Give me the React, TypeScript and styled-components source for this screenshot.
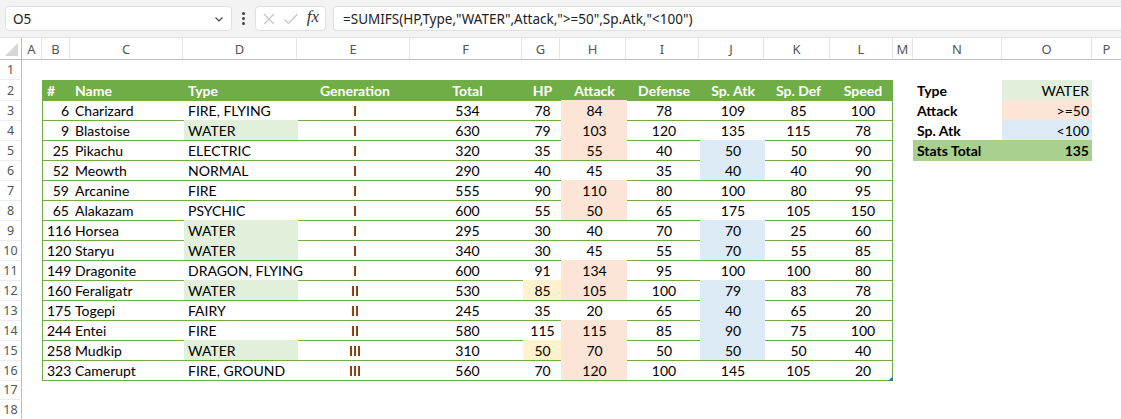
import styled, { createGlobalStyle } from 'styled-components';

const GlobalStyle = createGlobalStyle`
  html, body { margin: 0; padding: 0; background: #fff; }
  body { width: 1121px; height: 419px; overflow: hidden; }
  * { box-sizing: border-box; }
`;

const UI_FONT = `'Noto Sans', 'Open Sans', sans-serif`;
const CELL_FONT = `Lato, 'Noto Sans', sans-serif`;

const COLS = `22px 20px 28px 113px 114px 113px 112px 38px 66px 73px 65px 66px 63px 20px 89px 90px 1fr`;
const TABLE_COLS = `28px 113px 114px 113px 112px 38px 66px 73px 65px 66px 63px`;

const GREEN = '#70ad47';
const FILLS = {
  water: '#e2efda',
  attack: '#fce4d6',
  spatk: '#ddebf7',
  hp: '#fff2cc',
  total: '#a9d08e',
};

const Page = styled.div`
  width: 1121px;
  height: 419px;
  overflow: hidden;
  background: #fff;
`;

/* ---------- formula bar ---------- */

const Toolbar = styled.div`
  height: 38px;
  background: #f3f3f3;
  display: flex;
  align-items: center;
  padding: 0 0 0 5px;
  border-bottom: 1px solid #e2e2e2;
`;

const Box = styled.div`
  height: 25px;
  background: #fff;
  border: 1px solid #e0e0e0;
  border-radius: 4px;
  display: flex;
  align-items: center;
  font-family: ${UI_FONT};
  font-size: 13.5px;
  color: #222;
`;

const NameBox = styled(Box)`
  width: 227px;
  padding: 0 6px 0 7px;
  justify-content: space-between;
`;

const Dots = styled.div`
  width: 23px;
  display: flex;
  flex-direction: column;
  align-items: center;
  gap: 2px;
  span {
    width: 3px;
    height: 3px;
    border-radius: 50%;
    background: #444;
  }
`;

const FxBox = styled(Box)`
  width: 71px;
  padding: 0 6px 0 6px;
  justify-content: space-between;
`;

const Fx = styled.span`
  font-family: 'Liberation Serif', serif;
  font-style: italic;
  font-size: 17px;
  color: #333;
  margin-top: -3px;
`;

const FormulaBox = styled(Box)`
  flex: 1;
  margin-left: 7px;
  padding-left: 9px;
  border-right: none;
  border-radius: 4px 0 0 4px;
  white-space: pre;
`;

/* ---------- sheet ---------- */

const SheetRow = styled.div<{ $h?: number }>`
  display: grid;
  grid-template-columns: ${COLS};
  height: ${({ $h }) => $h ?? 20}px;
`;

const ColHead = styled.div`
  border-right: 1px solid #e4e4e4;
  border-bottom: 1px solid #bdbdbd;
  display: flex;
  align-items: center;
  justify-content: center;
  font-family: ${UI_FONT};
  font-size: 13px;
  color: #555;
  &:last-child { border-right: none; }
`;

const Corner = styled(ColHead)`
  position: relative;
  border-right: 1px solid #bdbdbd;
  &::after {
    content: '';
    position: absolute;
    right: 3px;
    bottom: 3px;
    border-style: solid;
    border-width: 0 0 13px 13px;
    border-color: transparent transparent #d6d6d6 transparent;
  }
`;

const RowNum = styled.div`
  border-right: 1px solid #bdbdbd;
  border-bottom: 1px solid #ececec;
  display: flex;
  align-items: center;
  justify-content: center;
  font-family: ${UI_FONT};
  font-size: 12.5px;
  color: #555;
`;

const Span = styled.div<{ $n: number }>`
  grid-column: span ${({ $n }) => $n};
`;

const TableRow = styled.div<{ $head?: boolean }>`
  grid-column: span 11;
  position: relative;
  display: grid;
  grid-template-columns: ${TABLE_COLS};
  border-left: 1px solid ${GREEN};
  border-right: 1px solid ${GREEN};
  border-bottom: 1px solid ${GREEN};
  background: ${({ $head }) => ($head ? GREEN : 'transparent')};
  color: ${({ $head }) => ($head ? '#fff' : '#000')};
  font-weight: ${({ $head }) => ($head ? 700 : 400)};
`;

const Handle = styled.div`
  position: absolute;
  right: -1px;
  bottom: -1px;
  border-style: solid;
  border-width: 0 0 5px 5px;
  border-color: transparent transparent #4a6fa0 transparent;
`;

const Cell = styled.div<{
  $align?: 'left' | 'center' | 'right';
  $fill?: string;
  $bold?: boolean;
  $rule?: boolean;
  $tight?: boolean;
}>`
  font-family: ${CELL_FONT};
  font-size: 14px;
  line-height: 19px;
  padding: 1px ${({ $tight }) => ($tight ? 2 : 3)}px 0 4px;
  white-space: nowrap;
  overflow: visible;
  text-align: ${({ $align }) => $align ?? 'left'};
  background: ${({ $fill }) => $fill ?? 'transparent'};
  font-weight: ${({ $bold }) => ($bold ? 700 : 'inherit')};
  ${({ $rule }) => $rule && 'border-bottom: 1px solid #000;'}
`;

type Mon = [number, string, string, string, number, number, number, number, number, number, number];

const mons: Mon[] = [
  [6, 'Charizard', 'FIRE, FLYING', 'I', 534, 78, 84, 78, 109, 85, 100],
  [9, 'Blastoise', 'WATER', 'I', 630, 79, 103, 120, 135, 115, 78],
  [25, 'Pikachu', 'ELECTRIC', 'I', 320, 35, 55, 40, 50, 50, 90],
  [52, 'Meowth', 'NORMAL', 'I', 290, 40, 45, 35, 40, 40, 90],
  [59, 'Arcanine', 'FIRE', 'I', 555, 90, 110, 80, 100, 80, 95],
  [65, 'Alakazam', 'PSYCHIC', 'I', 600, 55, 50, 65, 175, 105, 150],
  [116, 'Horsea', 'WATER', 'I', 295, 30, 40, 70, 70, 25, 60],
  [120, 'Staryu', 'WATER', 'I', 340, 30, 45, 55, 70, 55, 85],
  [149, 'Dragonite', 'DRAGON, FLYING', 'I', 600, 91, 134, 95, 100, 100, 80],
  [160, 'Feraligatr', 'WATER', 'II', 530, 85, 105, 100, 79, 83, 78],
  [175, 'Togepi', 'FAIRY', 'II', 245, 35, 20, 65, 40, 65, 20],
  [244, 'Entei', 'FIRE', 'II', 580, 115, 115, 85, 90, 75, 100],
  [258, 'Mudkip', 'WATER', 'III', 310, 50, 70, 50, 50, 50, 40],
  [323, 'Camerupt', 'FIRE, GROUND', 'III', 560, 70, 120, 100, 145, 105, 20],
];

const headers = ['#', 'Name', 'Type', 'Generation', 'Total', 'HP', 'Attack', 'Defense', 'Sp. Atk', 'Sp. Def', 'Speed'];
const letters = ['A', 'B', 'C', 'D', 'E', 'F', 'G', 'H', 'I', 'J', 'K', 'L', 'M', 'N', 'O', 'P'];

const criteria: [string, string, string][] = [
  ['Type', 'WATER', FILLS.water],
  ['Attack', '>=50', FILLS.attack],
  ['Sp. Atk', '<100', FILLS.spatk],
];

const total = mons
  .filter((m) => m[2] === 'WATER' && m[6] >= 50 && m[8] < 100)
  .reduce((s, m) => s + m[5], 0);

const Chevron = () => (
  <svg width="12" height="12" viewBox="0 0 12 12">
    <path d="M2.5 4.5 L6 8 L9.5 4.5" fill="none" stroke="#444" strokeWidth="1.2" />
  </svg>
);

const Cross = () => (
  <svg width="14" height="14" viewBox="0 0 14 14">
    <path d="M2 2 L12 12 M12 2 L2 12" stroke="#c4c4c4" strokeWidth="1.1" />
  </svg>
);

const Tick = () => (
  <svg width="16" height="14" viewBox="0 0 16 14">
    <path d="M1.5 7.5 L5.5 11.5 L14.5 2" fill="none" stroke="#c4c4c4" strokeWidth="1.1" />
  </svg>
);

function SidePanel({ row }: { row: number }) {
  if (row >= 2 && row <= 4) {
    const [label, value, fill] = criteria[row - 2];
    return (
      <>
        <Cell $bold $rule={row === 4}>{label}</Cell>
        <Cell $align="right" $fill={fill} $rule={row === 4}>{value}</Cell>
      </>
    );
  }
  if (row === 5) {
    return (
      <>
        <Cell $bold $fill={FILLS.total}>Stats Total</Cell>
        <Cell $bold $align="right" $fill={FILLS.total}>{total}</Cell>
      </>
    );
  }
  return <Span $n={2} />;
}

function MonRow({ m, last }: { m: Mon; last: boolean }) {
  const water = m[2] === 'WATER';
  const atk = m[6] >= 50;
  const sp = m[8] < 100;
  return (
    <TableRow>
      <Cell $align="right" $tight>{m[0]}</Cell>
      <Cell>{m[1]}</Cell>
      <Cell $fill={water ? FILLS.water : undefined}>{m[2]}</Cell>
      <Cell $align="center">{m[3]}</Cell>
      <Cell $align="center">{m[4]}</Cell>
      <Cell $align="center" $fill={water && atk && sp ? FILLS.hp : undefined}>{m[5]}</Cell>
      <Cell $align="center" $fill={atk ? FILLS.attack : undefined}>{m[6]}</Cell>
      <Cell $align="center">{m[7]}</Cell>
      <Cell $align="center" $fill={sp ? FILLS.spatk : undefined}>{m[8]}</Cell>
      <Cell $align="center">{m[9]}</Cell>
      <Cell $align="center">{m[10]}</Cell>
      {last && <Handle />}
    </TableRow>
  );
}

export default function App() {
  const rowNums = Array.from({ length: 18 }, (_, i) => i + 1);
  return (
    <Page>
      <GlobalStyle />
      <Toolbar>
        <NameBox>
          <span>O5</span>
          <Chevron />
        </NameBox>
        <Dots>
          <span />
          <span />
          <span />
        </Dots>
        <FxBox>
          <Cross />
          <Tick />
          <Fx>fx</Fx>
        </FxBox>
        <FormulaBox>{'=SUMIFS(HP,Type,"WATER",Attack,">=50",Sp.Atk,"<100")'}</FormulaBox>
      </Toolbar>

      <SheetRow $h={22}>
        <Corner />
        {letters.map((l) => (
          <ColHead key={l}>{l}</ColHead>
        ))}
      </SheetRow>

      {rowNums.map((n) => {
        let table;
        if (n === 2) {
          table = (
            <TableRow $head>
              {headers.map((h, i) => (
                <Cell key={h} $align={i < 3 ? 'left' : 'center'}>{h}</Cell>
              ))}
            </TableRow>
          );
        } else if (n >= 3 && n <= 16) {
          table = <MonRow m={mons[n - 3]} last={n === 16} />;
        } else {
          table = <Span $n={11} />;
        }
        return (
          <SheetRow key={n}>
            <RowNum>{n}</RowNum>
            <div />
            {table}
            <div />
            <SidePanel row={n} />
            <div />
          </SheetRow>
        );
      })}
    </Page>
  );
}
